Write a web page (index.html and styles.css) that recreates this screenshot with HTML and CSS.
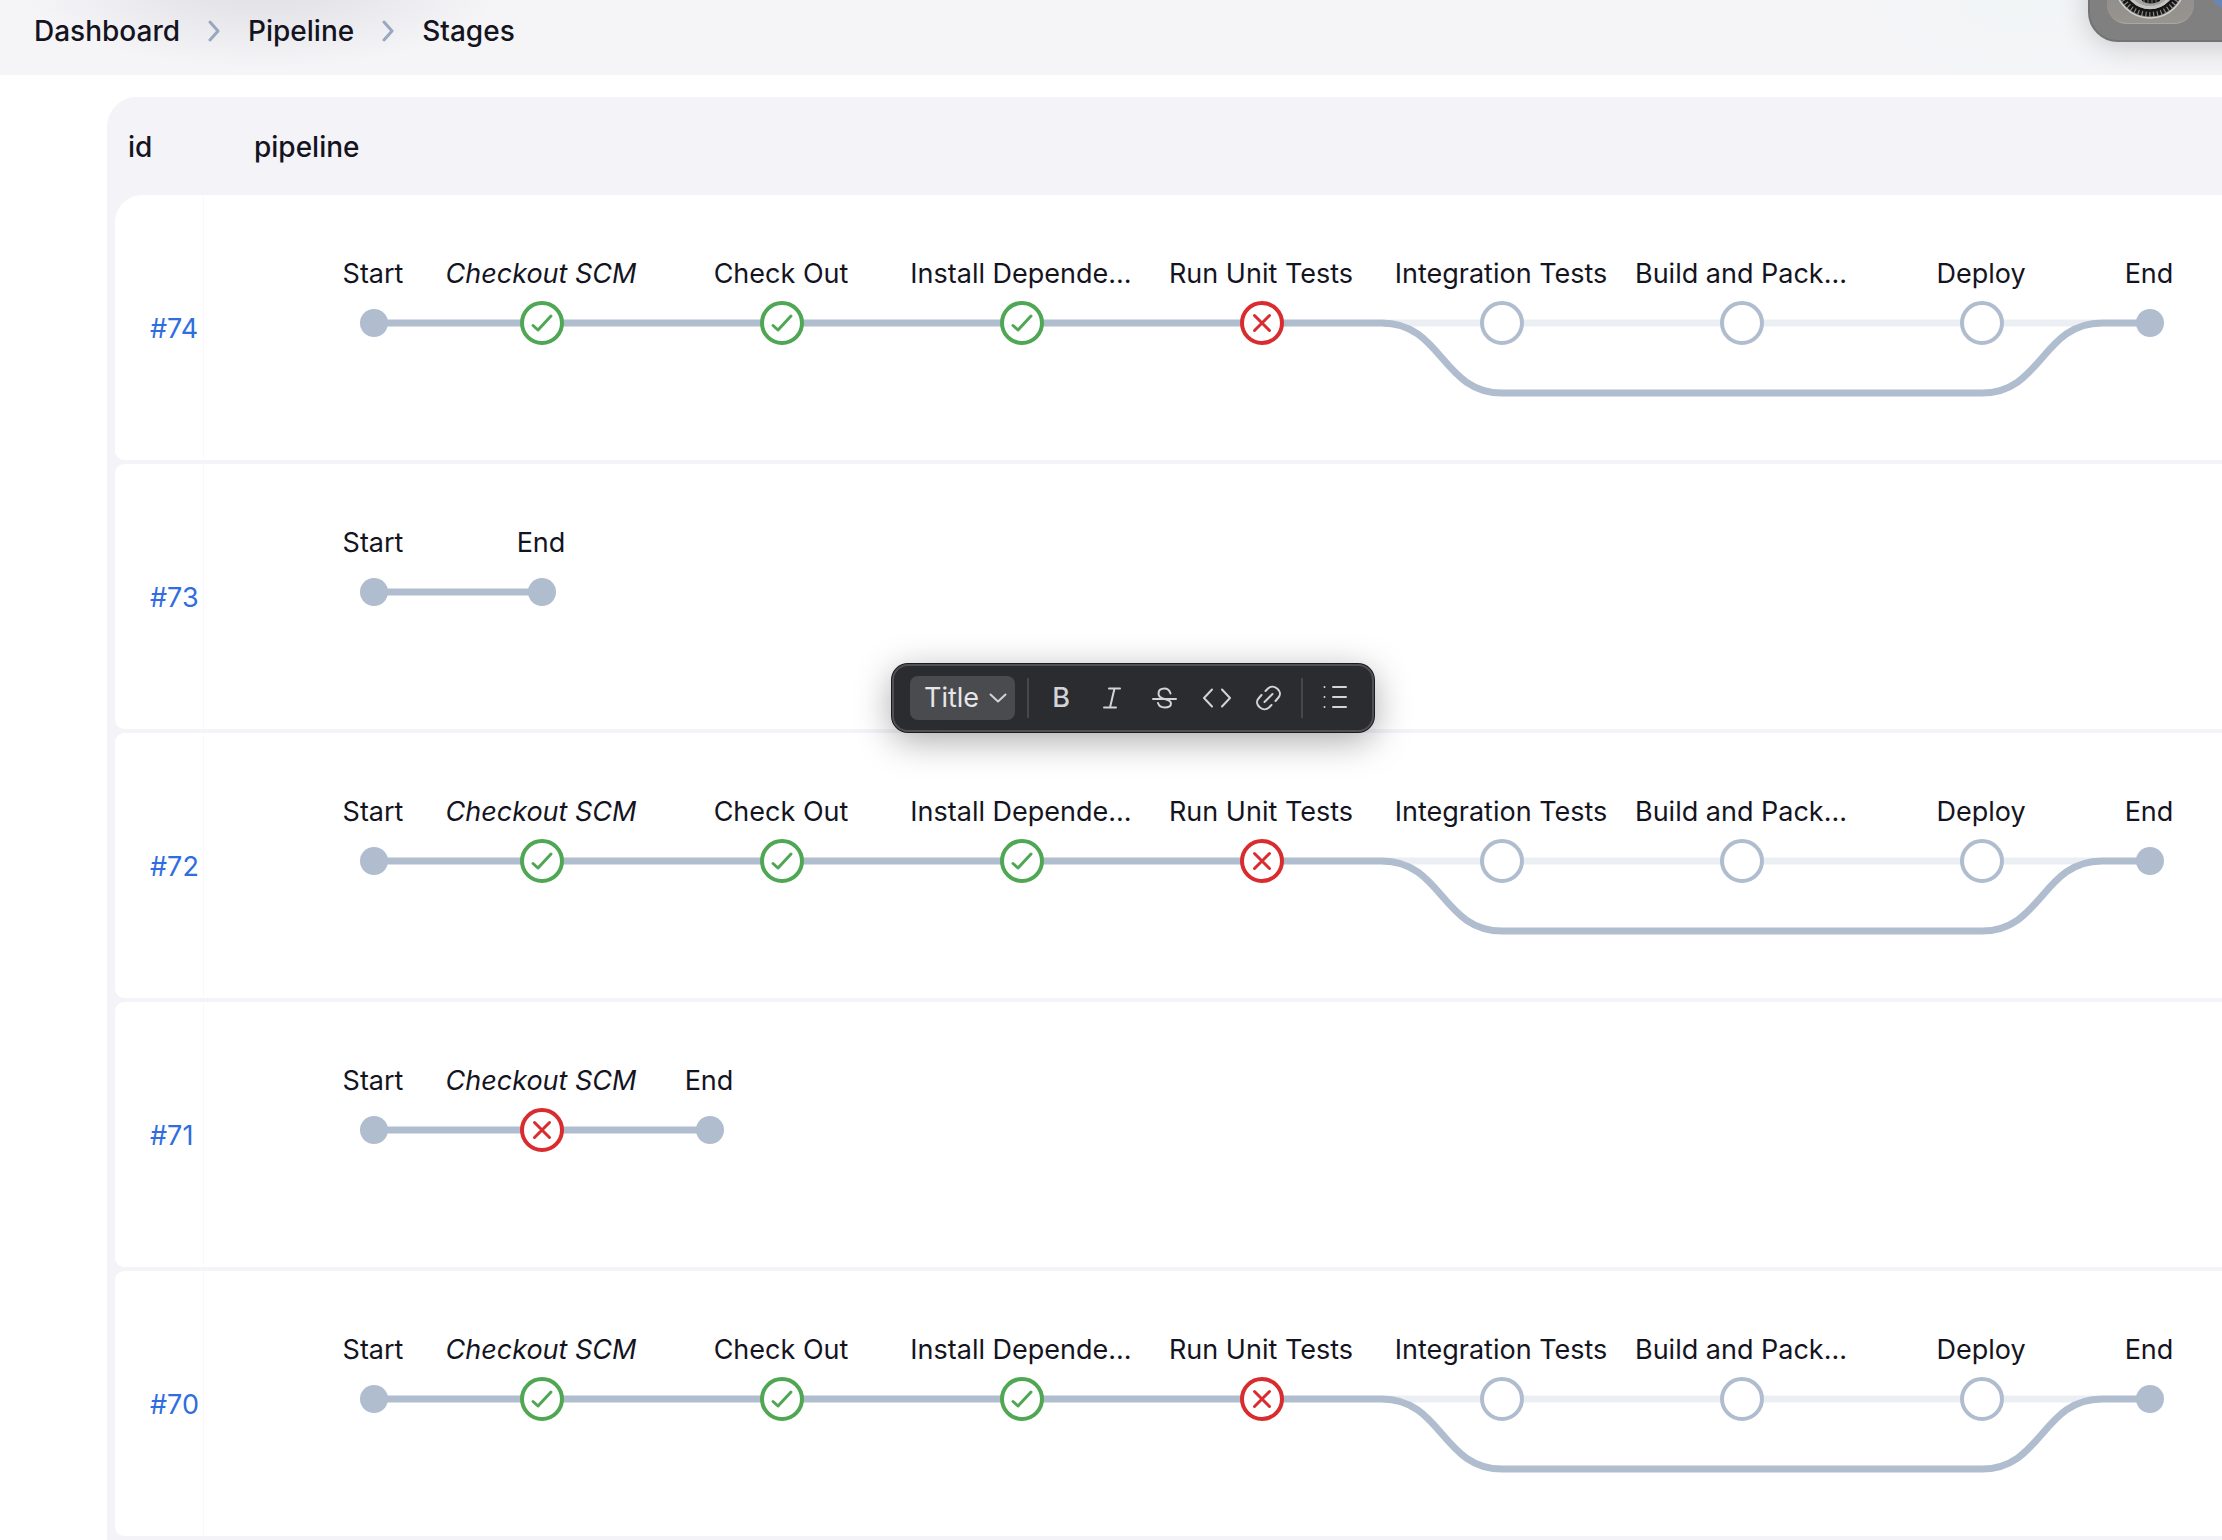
FILE: index.html
```html
<!DOCTYPE html>
<html lang="en">
<head>
<meta charset="utf-8">
<meta name="viewport" content="width=device-width, initial-scale=1">
<title>Stages</title>
<link rel="stylesheet" href="styles.css">
</head>
<body>
<svg class="defs" aria-hidden="true">
  <defs>
    <circle id="dot" r="14" class="dot"/>
    <g id="ok" class="ok"><circle r="20"/><path d="M-9 2.500L-4 7L9 -7"/></g>
    <g id="fail" class="fail"><circle r="20"/><path d="M-7.500 -7.500L7.500 7.500M7.500 -7.500L-7.500 7.500"/></g>
    <circle id="skipped" r="20" class="skipped"/>
    <g id="graph">
      <path class="line-skipped" d="M1127 128H1845"/>
      <path class="line" d="M119 128H1127C1187 128 1187 198 1247 198H1727C1787 198 1787 128 1847 128H1895"/>
      <use href="#dot" x="119" y="128"/>
      <use href="#ok" x="287" y="128"/>
      <use href="#ok" x="527" y="128"/>
      <use href="#ok" x="767" y="128"/>
      <use href="#fail" x="1007" y="128"/>
      <use href="#skipped" x="1247" y="128"/>
      <use href="#skipped" x="1487" y="128"/>
      <use href="#skipped" x="1727" y="128"/>
      <use href="#dot" x="1895" y="128"/>
    </g>
  </defs>
</svg>

<header class="topbar">
  <nav aria-label="Breadcrumb">
    <ol class="crumbs">
      <li><a href="#">Dashboard</a></li>
      <li class="sep" aria-hidden="true"><svg width="12" height="22" viewBox="0 0 12 22"><path d="M2 2L10 11L2 20"/></svg></li>
      <li><a href="#">Pipeline</a></li>
      <li class="sep" aria-hidden="true"><svg width="12" height="22" viewBox="0 0 12 22"><path d="M2 2L10 11L2 20"/></svg></li>
      <li><a href="#">Stages</a></li>
    </ol>
  </nav>
  <div class="dock" aria-hidden="true">
    <span class="app app-settings">
      <svg width="87" height="50" viewBox="0 -26 87 50">
        <g transform="translate(43 -17)" fill="none">
          <circle r="35" fill="#8a8a89" stroke="#d2d0cc" stroke-width="1.500"/>
          <circle r="31" stroke="#161616" stroke-width="5" stroke-dasharray="2.600 1.200"/>
          <circle r="27.500" stroke="#161616" stroke-width="3"/>
          <circle r="24.500" stroke="#c4c3c0" stroke-width="3.500"/>
          <circle r="23" fill="#a5a4a2"/>
          <path d="M-9 12H11L10 18Q1 23 -8 18Z" fill="#181818"/>
          <path d="M-6 17V20M-2 17V21M2 17V21M6 17V20" stroke="#777" stroke-width="1"/>
        </g>
      </svg>
    </span>
    <span class="app app-blue"></span>
  </div>
</header>

<main class="content">
  <table class="runs">
    <thead>
      <tr><th class="col-id" scope="col">id</th><th class="col-pipe" scope="col">pipeline</th></tr>
    </thead>
    <tbody>
      <tr>
        <td class="run-id"><a href="#">#74</a></td>
        <td class="run-graph">
          <svg class="graph" height="265">
            <use href="#graph"/>
            <text x="118" y="88">Start</text><text x="286" y="88" class="synthetic">Checkout SCM</text><text x="526" y="88">Check Out</text><text x="766" y="88">Install Depende...</text><text x="1006" y="88">Run Unit Tests</text><text x="1246" y="88">Integration Tests</text><text x="1486" y="88">Build and Pack...</text><text x="1726" y="88">Deploy</text><text x="1894" y="88">End</text>
          </svg>
        </td>
      </tr>
      <tr>
        <td class="run-id"><a href="#">#73</a></td>
        <td class="run-graph">
          <svg class="graph" height="265">
            <path class="line" d="M119 128H287"/>
            <use href="#dot" x="119" y="128"/><use href="#dot" x="287" y="128"/>
            <text x="118" y="88">Start</text><text x="286" y="88">End</text>
          </svg>
        </td>
      </tr>
      <tr>
        <td class="run-id"><a href="#">#72</a></td>
        <td class="run-graph">
          <svg class="graph" height="265">
            <use href="#graph"/>
            <text x="118" y="88">Start</text><text x="286" y="88" class="synthetic">Checkout SCM</text><text x="526" y="88">Check Out</text><text x="766" y="88">Install Depende...</text><text x="1006" y="88">Run Unit Tests</text><text x="1246" y="88">Integration Tests</text><text x="1486" y="88">Build and Pack...</text><text x="1726" y="88">Deploy</text><text x="1894" y="88">End</text>
          </svg>
        </td>
      </tr>
      <tr>
        <td class="run-id"><a href="#">#71</a></td>
        <td class="run-graph">
          <svg class="graph" height="265">
            <path class="line" d="M119 128H455"/>
            <use href="#dot" x="119" y="128"/><use href="#fail" x="287" y="128"/><use href="#dot" x="455" y="128"/>
            <text x="118" y="88">Start</text><text x="286" y="88" class="synthetic">Checkout SCM</text><text x="454" y="88">End</text>
          </svg>
        </td>
      </tr>
      <tr>
        <td class="run-id"><a href="#">#70</a></td>
        <td class="run-graph">
          <svg class="graph" height="265">
            <use href="#graph"/>
            <text x="118" y="88">Start</text><text x="286" y="88" class="synthetic">Checkout SCM</text><text x="526" y="88">Check Out</text><text x="766" y="88">Install Depende...</text><text x="1006" y="88">Run Unit Tests</text><text x="1246" y="88">Integration Tests</text><text x="1486" y="88">Build and Pack...</text><text x="1726" y="88">Deploy</text><text x="1894" y="88">End</text>
          </svg>
        </td>
      </tr>
    </tbody>
  </table>
</main>

<div class="toolbar" role="toolbar" aria-label="Text formatting">
  <div class="style-box">
    <select class="style-select" aria-label="Text style"><option>Title</option></select>
    <svg class="style-arrow" width="18" height="10" viewBox="0 0 18 10" aria-hidden="true"><path d="M1.500 1.500L9 8.500L16.500 1.500"/></svg>
  </div>
  <span class="rule"></span>
  <button type="button" class="tool bold" aria-label="Bold">B</button>
  <button type="button" class="tool" aria-label="Italic"><svg width="28" height="28" viewBox="-14 -14 28 28"><path d="M-4 -9.500H7M-9 9.500H3M1.500 -9.500L-3 9.500"/></svg></button>
  <button type="button" class="tool" aria-label="Strikethrough"><svg width="28" height="28" viewBox="-14 -14 28 28"><path d="M-12 1H11M5.500 -4.500C4.500 -8 2.500 -9.500 -0.500 -9.500C-4.500 -9.500 -6.500 -7.500 -6.500 -4.500C-6.500 -1.500 -4.500 0 -0.500 1C4 2 6 3 6 5.500C6 8 3.500 9.500 -0.500 9.500C-4 9.500 -6 8 -7 5"/></svg></button>
  <button type="button" class="tool" aria-label="Code"><svg width="28" height="28" viewBox="-14 -14 28 28"><path d="M-5 -8.500L-13 0L-5 8.500M5 -8.500L13 0L5 8.500"/></svg></button>
  <button type="button" class="tool" aria-label="Link"><svg width="28" height="28" viewBox="-14 -14 28 28"><path d="M-4.500 4L3.500 -4M-3.500 -7L-1 -9.500C5 -15 14.500 -6.500 9.500 -0.500L6.500 3M2.500 7L0 9.500C-6 15 -15.500 6.500 -10.500 0.500L-7.500 -3"/></svg></button>
  <span class="rule"></span>
  <button type="button" class="tool" aria-label="Bulleted list"><svg width="28" height="28" viewBox="-14 -14 28 28"><path d="M-2 -11H11M-2 -1H11M-2 9H11"/><path d="M-10.500 -11h.01M-10.500 -1h.01M-10.500 9h.01" stroke-width="3"/></svg></button>
</div>
</body>
</html>
```
FILE: styles.css
```css
* { box-sizing: border-box; }

body {
  margin: 0;
  background: #fff;
  color: #14141f;
  font: 27px/36px Inter, "Liberation Sans", sans-serif;
  overflow-x: hidden;
}

a { color: inherit; text-decoration: none; }

.defs { position: absolute; width: 0; height: 0; }

/* Top bar */
.topbar {
  position: relative;
  overflow: hidden;
  padding: 13px 34px 26px;
  background:
    radial-gradient(240px 84px at 264px -16px, #e0e0e4 0%, #e6e6ea 35%, #f5f5f800 100%),
    radial-gradient(160px 90px at 2020px 0, #f1f5f6 0%, #f5f5f800 100%),
    #f5f5f8;
}

.crumbs {
  display: flex;
  align-items: center;
  gap: 28px;
  margin: 0;
  padding: 0;
  list-style: none;
  font-size: 28px;
  font-weight: 500;
}

.sep { display: flex; }

.sep path {
  fill: none;
  stroke: #98a8c0;
  stroke-width: 3;
  stroke-linecap: round;
  stroke-linejoin: round;
}

.dock {
  position: absolute;
  top: -40px;
  right: -60px;
  width: 194px;
  height: 82px;
  border: 2px solid #737374;
  border-radius: 30px;
  background: #808081;
  box-shadow: 0 4px 30px #00000030;
}

.app { position: absolute; overflow: hidden; }

.app-settings {
  left: 17px;
  bottom: 16px;
  width: 87px;
  height: 50px;
  border-bottom: 1px solid #aaa6a1;
  border-radius: 0 0 20px 20px;
  background: linear-gradient(#8b8b8a, #98948f);
}

.app-blue {
  left: 122px;
  bottom: 31px;
  width: 87px;
  height: 60px;
  border-radius: 16px;
  background: #6688b8;
}

/* Runs table */
.content {
  margin: 22px 0 0 107px;
  padding-left: 8px;
  border-radius: 30px 0 0 0;
  background: #f3f3f8;
  overflow: hidden;
}

.runs {
  width: 100%;
  table-layout: fixed;
  border-collapse: separate;
  border-spacing: 0 4px;
}

th {
  height: 90px;
  padding: 2px 0 0;
  text-align: left;
  font-size: 28px;
  font-weight: 500;
}

.col-id { width: 88px; padding-left: 13px; }
.col-pipe { padding-left: 51px; }

td { padding: 0; background: #fff; }

.run-id {
  padding: 2px 0 0 35px;
  border-radius: 9px 0 0 9px;
  color: #2f6de0;
}

tbody tr:first-child .run-id { border-top-left-radius: 27px; }

.run-graph {
  padding-left: 51px;
  border-left: 1px solid #f9f9fb;
}

.graph { display: block; width: 100%; }

.graph text { fill: #14141f; text-anchor: middle; }
.graph .synthetic { font-style: italic; }

.line, .line-skipped { fill: none; stroke: #b0bdcf; stroke-width: 7; }
.line-skipped { stroke: #ebeff4; }

.dot { fill: #b0bdcf; }
.ok, .fail, .skipped { fill: #fff; stroke-width: 4; }
.ok { stroke: #4fa754; }
.fail { stroke: #d82c2e; }
.skipped { stroke: #b0bdcf; }
.ok path, .fail path {
  fill: none;
  stroke-width: 3;
  stroke-linecap: round;
  stroke-linejoin: round;
}

/* Floating format toolbar */
.toolbar {
  position: absolute;
  top: 664px;
  left: 892px;
  display: flex;
  align-items: center;
  gap: 12px;
  height: 68px;
  padding: 0 17px 0 16px;
  border: 2px solid #505055;
  border-radius: 16px;
  background: #2b2c30;
  box-shadow: 0 0 0 1px #1b1b1f, 0 8px 36px #00000059;
  color: #d3d3da;
}

.style-box {
  display: grid;
  grid-template-columns: 1fr 26px;
  align-items: center;
  width: 105px;
  height: 44px;
  border-radius: 8px;
  background: #4a4b4f;
}

.style-select {
  grid-area: 1 / 1 / 2 / 3;
  width: 100%;
  height: 44px;
  margin: 0;
  padding: 0 0 0 14px;
  border: 0;
  background: none;
  appearance: none;
  color: #e6e6ea;
  font: inherit;
}

.style-arrow { grid-area: 1 / 2; pointer-events: none; }

.style-arrow path, .tool path {
  fill: none;
  stroke: currentColor;
  stroke-width: 2;
  stroke-linecap: round;
  stroke-linejoin: round;
}

.rule { width: 2px; height: 40px; background: #46474c; }

.tool {
  display: flex;
  align-items: center;
  justify-content: center;
  width: 40px;
  height: 44px;
  padding: 0;
  border: 0;
  background: none;
  color: inherit;
  font: inherit;
}

.bold { font-weight: 500; }
```
